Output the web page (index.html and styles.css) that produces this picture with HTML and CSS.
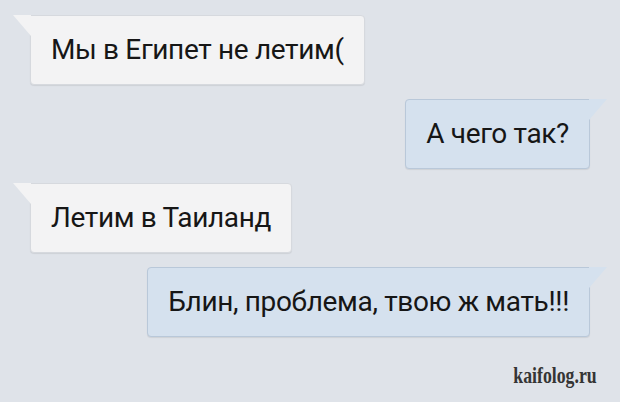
FILE: index.html
```html
<!DOCTYPE html>
<html lang="ru">
<head>
    <meta charset="UTF-8">
    <title>Чат</title>
    <link rel="stylesheet" href="styles.css">
</head>
<body>
    <div class="chat">
        <div class="row in"><div class="bubble">Мы в Египет не летим(</div></div>
        <div class="row out"><div class="bubble">А чего так?</div></div>
        <div class="row in"><div class="bubble">Летим в Таиланд</div></div>
        <div class="row out"><div class="bubble">Блин, проблема, твою ж мать!!!</div></div>
    </div>
    <div class="mark"><span>kaifolog.ru</span></div>
</body>
</html>
```

FILE: styles.css
```css
body, html {
    margin: 0;
    height: 100%;
    background: #dfe3e9;
    font-family: 'Roboto', sans-serif;
    overflow: hidden;
}

.chat {
    display: flex;
    flex-direction: column;
    gap: 14px;
    padding: 15px 30px 0 30px;
}

.row {
    display: flex;
}

.row.out {
    justify-content: flex-end;
}

.bubble {
    position: relative;
    height: 70px;
    line-height: 68px;
    padding: 0 20px;
    font-size: 28px;
    letter-spacing: -0.35px;
    color: #161616;
    border-radius: 0 4px 4px 4px;
    box-sizing: border-box;
}

.in .bubble {
    background: #f3f3f4;
    border: 1px solid #d6d9de;
    box-shadow: 0 1px 1px rgba(0, 0, 0, 0.08);
}

.out .bubble {
    background: #d5e1ee;
    border: 1px solid #b9c8d9;
    border-radius: 4px 0 4px 4px;
    box-shadow: 0 1px 1px rgba(0, 0, 0, 0.08);
}

/* tails */
.bubble::before {
    content: '';
    position: absolute;
    top: -1px;
    width: 18px;
    height: 21px;
}

.in .bubble::before {
    left: -18px;
    background: #f3f3f4;
    clip-path: polygon(0 0, 100% 0, 100% 100%);
}

.out .bubble::before {
    right: -18px;
    background: #d5e1ee;
    clip-path: polygon(0 0, 100% 0, 0 100%);
}

.mark {
    text-align: right;
    padding: 24px 23px 0 0;
    font-family: 'Liberation Serif', serif;
    font-weight: bold;
    font-size: 24px;
    line-height: 28px;
    color: #353535;
}

.mark span {
    display: inline-block;
    transform: scaleX(0.74);
    transform-origin: right center;
}
```
